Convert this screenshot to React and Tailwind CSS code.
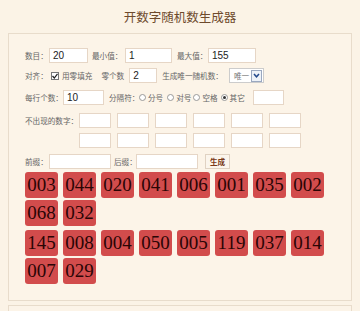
import React from 'react'

const font = { fontFamily: '"Noto Sans CJK SC", "Noto Sans", sans-serif' }

function Field({ className = '', value = '' }) {
  return (
    <div
      className={`h-[15px] shrink-0 bg-white border border-[#e6d6c6] text-[10px] leading-[13px] pl-[3px] text-[#222] ${className}`}
      style={{ fontFamily: '"Liberation Sans", Arial, sans-serif' }}
    >
      {value}
    </div>
  )
}

function Radio({ checked }) {
  return (
    <span className="inline-flex items-center justify-center w-[7px] h-[7px] rounded-full border border-[#999] bg-white mr-[2px]">
      {checked && <span className="w-[3px] h-[3px] rounded-full bg-[#333]" />}
    </span>
  )
}

function NumGroup({ nums }) {
  return (
    <div className="flex flex-wrap gap-x-[5px] gap-y-[2px] w-[310px]">
      {nums.map((n, i) => (
        <div
          key={i}
          className="w-[33px] h-[26px] rounded-[3px] bg-[#d24c4c] text-[#2a0505] text-[19px] leading-[26px] text-center"
          style={{ fontFamily: '"Liberation Serif", serif' }}
        >
          {n}
        </div>
      ))}
    </div>
  )
}

export default function App() {
  const g1 = ['003', '044', '020', '041', '006', '001', '035', '002', '068', '032']
  const g2 = ['145', '008', '004', '050', '005', '119', '037', '014', '007', '029']

  return (
    <div className="w-[360px] h-[311px] overflow-hidden bg-[#fbf3e6] text-[#666] text-[7.6px] leading-[15px]" style={font}>
      <div className="h-[33px] flex items-center justify-center text-[12.5px] text-[#6e4a2c]">
        开数字随机数生成器
      </div>
      <div className="mx-[8px] h-[268px] border border-[#e8dccb] bg-[#fcf4e8] pl-[16px] pt-[14px]">
        {/* row 1 */}
        <div className="flex items-center h-[15px] whitespace-nowrap">
          <span className="w-[24px]">数目：</span>
          <Field className="w-[39px]" value="20" />
          <span className="ml-[4px] w-[33px]">最小值：</span>
          <Field className="w-[47px]" value="1" />
          <span className="ml-[5px] w-[31px]">最大值：</span>
          <Field className="w-[48px]" value="155" />
        </div>
        {/* row 2 */}
        <div className="flex items-center h-[15px] mt-[5px] whitespace-nowrap">
          <span className="w-[26px]">对齐：</span>
          <span className="w-[8px] h-[8px] border border-[#777] bg-white flex items-center justify-center">
            <svg width="6" height="6" viewBox="0 0 6 6"><path d="M0.5 3 L2.3 5 L5.5 0.8" stroke="#222" strokeWidth="1.2" fill="none" /></svg>
          </span>
          <span className="ml-[3px]">用零填充</span>
          <span className="ml-[9px]">零个数</span>
          <Field className="w-[28px] ml-[5px]" value="2" />
          <span className="ml-[5px]">生成唯一随机数：</span>
          <div className="ml-[6px] h-[15px] w-[35px] bg-white border border-[#ccc] flex items-center justify-between pl-[4px] text-[#777]">
            <span>唯一</span>
            <span className="w-[11px] h-[12px] mr-[1px] border border-[#9aa8c0] bg-[#eef2f8] flex items-center justify-center">
              <svg width="7" height="5" viewBox="0 0 7 5"><path d="M1 1 L3.5 3.8 L6 1" stroke="#244a8c" strokeWidth="1.5" fill="none" /></svg>
            </span>
          </div>
        </div>
        {/* row 3 */}
        <div className="flex items-center h-[15px] mt-[7px] whitespace-nowrap">
          <span className="w-[38px]">每行个数：</span>
          <Field className="w-[41px]" value="10" />
          <span className="ml-[5px] w-[30px]">分隔符：</span>
          <span className="flex items-center"><Radio />分号</span>
          <span className="ml-[4px] flex items-center"><Radio />对号</span>
          <span className="ml-[2px] flex items-center"><Radio />空格</span>
          <span className="ml-[3px] flex items-center"><Radio checked />其它</span>
          <Field className="w-[31px] ml-[8px]" />
        </div>
        {/* row 4/5 */}
        <div className="flex mt-[8px] whitespace-nowrap">
          <span className="w-[54px] shrink-0">不出现的数字：</span>
          <div className="grid grid-cols-6 gap-x-[6px] gap-y-[5px]">
            {Array.from({ length: 12 }).map((_, i) => (
              <Field key={i} className="w-[32px]" />
            ))}
          </div>
        </div>
        {/* row 6 */}
        <div className="flex items-center h-[15px] mt-[6px] whitespace-nowrap">
          <span className="w-[24px]">前缀：</span>
          <Field className="w-[62px]" />
          <span className="ml-[3px] w-[22px]">后缀：</span>
          <Field className="w-[62px]" />
          <div className="ml-[7px] h-[15px] w-[25px] border border-[#e0d2c2] bg-[#fbf5ec] text-[#7a3a1a] font-bold leading-[13px] text-center">生成</div>
        </div>
        <div className="mt-[3px]">
          <NumGroup nums={g1} />
        </div>
        <div className="mt-[4px]">
          <NumGroup nums={g2} />
        </div>
      </div>
      <div className="mx-[8px] mt-[4px] h-[20px] border border-[#e8dccb] bg-[#fcf4e8]" />
    </div>
  )
}
